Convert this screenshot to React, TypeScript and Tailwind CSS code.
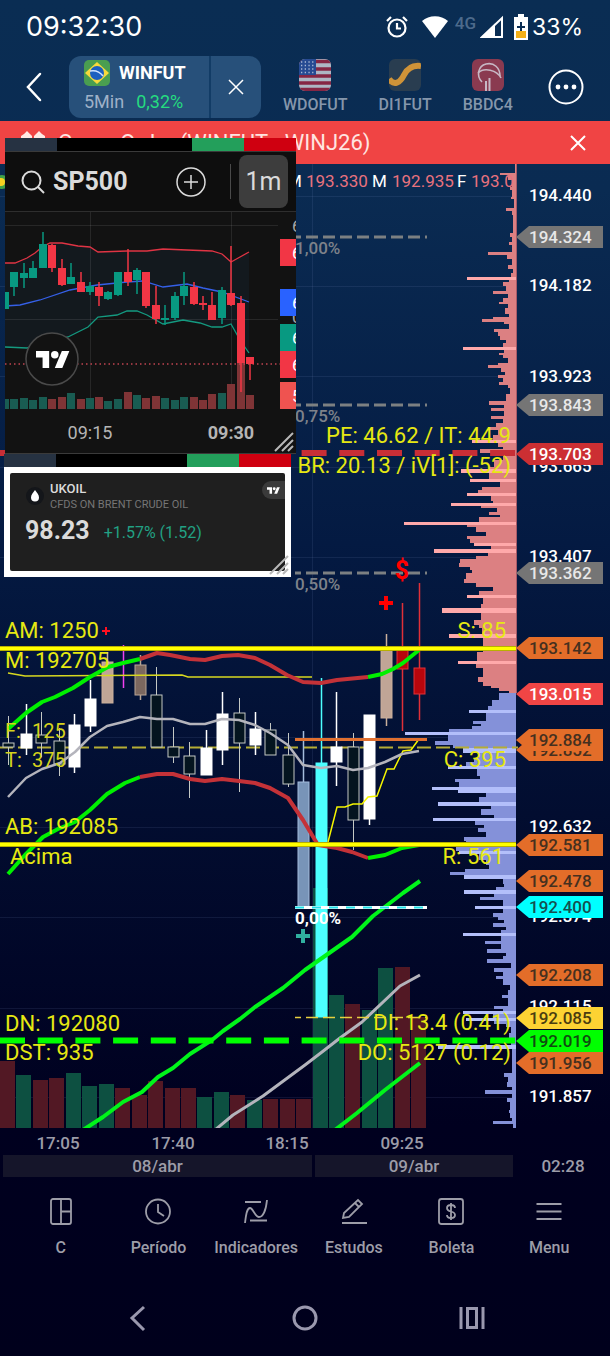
import type { ReactNode } from "react";

type Kind = "hollow" | "white" | "tan" | "brown" | "magenta" | "steel" | "cyan" | "red";

// x, high, body top, body bottom, low, kind
const candles: [number, number, number, number, number, Kind][] = [
  [8, 716, 743, 747, 765, "hollow"],
  [26, 704, 734, 748, 755, "white"],
  [41, 712, 735, 743, 757, "hollow"],
  [59, 728, 741, 764, 776, "hollow"],
  [74, 714, 725, 767, 773, "white"],
  [90, 680, 699, 726, 732, "white"],
  [107, 652, 662, 703, 703, "tan"],
  [123, 645, 645, 645, 688, "magenta"],
  [140, 655, 665, 695, 700, "brown"],
  [156, 667, 695, 747, 747, "hollow"],
  [173, 727, 747, 757, 763, "hollow"],
  [189, 742, 756, 774, 798, "hollow"],
  [206, 730, 748, 775, 775, "white"],
  [222, 692, 714, 750, 765, "white"],
  [239, 698, 713, 743, 792, "hollow"],
  [255, 712, 729, 745, 755, "white"],
  [270, 723, 730, 755, 755, "hollow"],
  [288, 733, 755, 784, 787, "hollow"],
  [303, 731, 782, 907, 907, "steel"],
  [321, 678, 763, 1017, 1017, "cyan"],
  [336, 692, 747, 762, 786, "white"],
  [353, 733, 747, 820, 850, "hollow"],
  [369, 715, 715, 819, 825, "white"],
  [386, 634, 650, 718, 726, "tan"],
  [402, 603, 650, 669, 731, "red"],
  [419, 583, 668, 694, 720, "red"],
];

const candleColors: Record<Kind, [string, string]> = {
  hollow: ["#04141f", "#c4c8c4"],
  white: ["#ffffff", "#ffffff"],
  tan: ["#c0a596", "#cbb09c"],
  brown: ["#7c685f", "#b8a596"],
  magenta: ["#f040f0", "#f040f0"],
  steel: ["#7894b8", "#a4bcdc"],
  cyan: ["#4cffff", "#4cffff"],
  red: ["#b8060c", "#e03038"],
};

const volumes: [number, "r" | "g"][] = [
  [1061, "r"], [1075, "g"], [1080, "r"], [1078, "r"], [1073, "g"], [1086, "g"], [1084, "g"],
  [1088, "r"], [1095, "r"], [1081, "r"], [1088, "r"], [1088, "r"], [1097, "g"], [1092, "g"],
  [1095, "r"], [1100, "g"], [1099, "r"], [1099, "r"], [1099, "r"], [888, "g"], [995, "g"],
  [1004, "r"], [1010, "g"], [968, "g"], [967, "r"], [1017, "r"],
];

// volume at price: y of the row start and its length
const sellProfile: [number, number][] = [
  [164, 1], [173, 16], [175, 8], [180, 4], [187, 6], [190, 4], [197, 5], [199, 2], [208, 10], [211, 4],
  [215, 3], [233, 6], [237, 4], [242, 7], [245, 4], [252, 28], [255, 9], [259, 4], [265, 8], [269, 3],
  [273, 5], [277, 49], [280, 7], [282, 13], [286, 10], [291, 23], [294, 8], [298, 13], [302, 17], [304, 8],
  [308, 11], [314, 7], [317, 23], [319, 34], [322, 12], [324, 7], [329, 22], [332, 18], [336, 16], [340, 10],
  [343, 13], [347, 53], [350, 12], [353, 17], [355, 13], [358, 8], [363, 18], [365, 28], [368, 15], [372, 11],
  [375, 18], [378, 13], [382, 17], [385, 8], [388, 6], [394, 10], [401, 27], [405, 12], [408, 25], [411, 12],
  [416, 25], [419, 13], [423, 20], [427, 28], [430, 18], [435, 23], [440, 44], [443, 18], [447, 13], [449, 36],
  [453, 13], [460, 22], [467, 27], [469, 55], [473, 27], [479, 46], [482, 16], [487, 34], [490, 38], [493, 49],
  [496, 25], [501, 23], [503, 65], [506, 35], [508, 19], [512, 27], [515, 16], [517, 37], [522, 112], [525, 49],
  [527, 40], [532, 30], [536, 49], [539, 46], [543, 42], [546, 25], [549, 82], [553, 28], [556, 40], [559, 56],
  [563, 57], [567, 46], [570, 44], [573, 50], [579, 52], [583, 40], [587, 23], [591, 37], [595, 49], [598, 33],
  [604, 35], [608, 74], [613, 35], [620, 42], [625, 37], [628, 34], [634, 67], [638, 33], [652, 39], [661, 58],
  [664, 40], [668, 33], [677, 38], [682, 33], [686, 25], [688, 17], [691, 7], [693, 0],
];

const buyProfile: [number, number][] = [
  [693, 17], [700, 24], [706, 28], [710, 47], [713, 30], [721, 43], [724, 35], [726, 44], [729, 67], [732, 111],
  [735, 68], [741, 81], [745, 63], [748, 53], [753, 37], [758, 42], [762, 50], [766, 68], [769, 39], [776, 36],
  [779, 61], [782, 57], [787, 84], [790, 58], [793, 30], [797, 37], [802, 78], [806, 25], [809, 35], [815, 22],
  [818, 83], [821, 41], [825, 32], [828, 38], [832, 30], [837, 52], [841, 50], [847, 60], [851, 57], [854, 37],
  [860, 30], [865, 27], [869, 51], [872, 66], [875, 52], [879, 13], [884, 12], [887, 20], [890, 52], [894, 22],
  [897, 36], [900, 13], [906, 41], [909, 13], [913, 23], [917, 18], [920, 12], [923, 23], [927, 10], [930, 15],
  [933, 53], [936, 15], [941, 31], [944, 15], [949, 29], [953, 10], [956, 13], [959, 29], [963, 5], [968, 22],
  [972, 13], [976, 20], [979, 13], [985, 6], [990, 8], [995, 14], [998, 8], [1006, 22], [1009, 13], [1011, 53],
  [1014, 23], [1018, 50], [1021, 22], [1024, 10], [1027, 5], [1033, 7], [1040, 5], [1045, 78], [1049, 4],
  [1073, 12], [1077, 8], [1082, 9], [1087, 4], [1090, 31], [1094, 4], [1098, 9], [1102, 6], [1110, 7],
  [1113, 6], [1118, 4], [1121, 23], [1124, 3], [1128, 0],
];

const gridRows = [196, 286, 376, 467, 557, 647, 737, 827, 917, 1008, 1097];

const priceLabels: [number, string][] = [
  [195, "194.440"],
  [285, "194.182"],
  [376, "193.923"],
  [466, "193.665"],
  [556, "193.407"],
  [826, "192.632"],
  [916, "192.374"],
  [1006, "192.115"],
  [1096, "191.857"],
];

const dark = "#45301f";

const priceTags: [number, string, string, string][] = [
  [237, "194.324", "#757575", "#e8e8e8"],
  [405, "193.843", "#757575", "#e8e8e8"],
  [454, "193.703", "#cc2f33", "#ffffff"],
  [573, "193.362", "#757575", "#e8e8e8"],
  [648, "193.142", "#e36d29", dark],
  [694, "193.015", "#f04545", "#ffffff"],
  [750, "192.852", "#e36d29", dark],
  [740, "192.884", "#e36d29", dark],
  [845, "192.581", "#e36d29", dark],
  [881, "192.478", "#e36d29", dark],
  [907, "192.400", "#00ffff", "#155050"],
  [975, "192.208", "#e36d29", dark],
  [1018, "192.085", "#fdd333", "#4a3d10"],
  [1041, "192.019", "#00ff00", "#104a10"],
  [1063, "191.956", "#e36d29", dark],
];

const notes: [number, number, string, "start" | "end"][] = [
  [5, 638, "AM: 1250", "start"],
  [5, 668, "M: 192705", "start"],
  [5, 834, "AB: 192085", "start"],
  [10, 864, "Acima", "start"],
  [5, 1031, "DN: 192080", "start"],
  [5, 1060, "DST: 935", "start"],
  [511, 443, "PE: 46.62 / IT: 44.9", "end"],
  [511, 473, "BR: 20.13 / iV[1]: (-52)", "end"],
  [506, 638, "S: 85", "end"],
  [506, 767, "C: 395", "end"],
  [504, 864, "R: 561", "end"],
  [511, 1030, "DI: 13.4 (0.41)", "end"],
  [511, 1060, "DO: 5127 (0.12)", "end"],
];

const fibs: [number, string][] = [
  [237, "1,00%"],
  [405, "0,75%"],
  [573, "0,50%"],
];

const hours: [number, string][] = [
  [58, "17:05"],
  [173, "17:40"],
  [287, "18:15"],
  [402, "09:25"],
];

const upperBand = "8,729 26,713 42,702 55,697 73,688 90,677 108,667 123,663 140,659";
const upperBandRed =
  "140,659 157,653 170,655 190,659 205,660 222,656 238,655 255,658 270,665 287,675 303,682 321,683 337,680 368,677";
const upperBandEnd = "368,677 382,674 393,669 403,663 419,650";
const middleBand =
  "8,797 26,778 42,769 60,763 75,752 90,737 107,726 123,722 140,717 157,719 173,719 190,724 205,724 222,719 239,720 255,725 270,733 288,745 303,765 321,768 337,766 353,770 368,768 385,762 402,754 419,751";
const lowerBand = "8,874 25,855 43,837 58,829 75,822 90,810 107,794 125,783 140,777";
const lowerBandRed =
  "140,777 157,774 173,774 190,779 205,781 222,779 239,781 255,783 270,788 288,798 303,820 318,845 337,848 352,852 368,858";
const lowerBandEnd = "368,858 385,855 402,848 419,845";
const longAverage =
  "83,1130 103,1117 123,1102 142,1092 158,1077 173,1068 190,1054 212,1040 223,1031 240,1019 255,1007 283,988 305,970 352,937 373,916 403,893 420,881";
const midAverage = "215,1130 233,1115 263,1096 305,1065 322,1052 340,1038 362,1022 400,986 420,975";
const lowAverage = "335,1130 357,1113 385,1090 407,1073 420,1063";

// x, high, body top, body bottom, low, volume top, color
const miniCandles: [number, number, number, number, number, number, "r" | "g"][] = [
  [5, 292, 292, 309, 309, 399, "g"],
  [14, 272, 272, 287, 296, 399, "g"],
  [24, 263, 273, 278, 288, 398, "g"],
  [33, 261, 268, 278, 278, 400, "g"],
  [43, 232, 244, 268, 268, 397, "g"],
  [52, 244, 245, 268, 272, 399, "r"],
  [62, 259, 268, 285, 286, 397, "r"],
  [71, 263, 277, 284, 284, 393, "g"],
  [81, 272, 282, 292, 292, 399, "r"],
  [90, 282, 286, 292, 295, 398, "g"],
  [99, 282, 287, 296, 306, 397, "r"],
  [108, 291, 292, 299, 300, 401, "g"],
  [118, 272, 272, 295, 296, 399, "g"],
  [128, 249, 272, 282, 286, 392, "r"],
  [137, 268, 270, 280, 294, 395, "g"],
  [146, 272, 272, 306, 308, 398, "r"],
  [156, 286, 305, 319, 324, 396, "r"],
  [165, 305, 318, 320, 325, 398, "g"],
  [175, 292, 296, 318, 320, 400, "g"],
  [184, 272, 286, 296, 305, 397, "g"],
  [194, 282, 287, 304, 305, 397, "r"],
  [203, 296, 303, 305, 310, 400, "r"],
  [212, 292, 305, 320, 320, 394, "r"],
  [222, 287, 290, 318, 324, 393, "g"],
  [231, 246, 293, 305, 306, 384, "r"],
  [241, 296, 303, 363, 392, 363, "r"],
  [250, 357, 357, 364, 380, 395, "r"],
];

const miniUpper =
  "5,263 15,263 27,258 35,253 42,247 50,243 62,243 78,246 90,247 98,252 127,251 147,251 163,249 187,250 212,251 222,254 231,262 240,257 249,252";
const miniMiddle = "5,306 20,305 40,300 70,290 97,285 127,282 143,281 163,287 187,284 203,288 222,292 249,302";
const miniLower =
  "5,347 27,348 68,337 88,327 98,317 117,315 127,311 137,311 147,315 163,324 183,320 200,323 212,327 222,327 231,324 240,340 249,353";

const miniTags: [number, string, string][] = [
  [212, "6", "none"],
  [303, "0", "none"],
  [239, "6", "#f23645"],
  [289, "6", "#2962ff"],
  [324, "6", "#089981"],
  [351, "6", "#f23645"],
  [382, "5", "#ef5350"],
];

function Profile({ rows, base, peak }: { rows: [number, number][]; base: string; peak: string }) {
  return (
    <g>
      {rows.slice(0, -1).map(([y, w], i) => {
        const h = rows[i + 1][0] - y;
        const isPeak = h <= 5 && w > 40 && w > rows[i + 1][1] * 1.3;
        return <rect key={i} x={516 - w} y={y} width={w} height={h} fill={isPeak ? peak : base} />;
      })}
    </g>
  );
}

function Cross({ x, y, r, width, color }: { x: number; y: number; r: number; width: number; color: string }) {
  return <path d={`M${x - r} ${y}h${r * 2}M${x} ${y - r}v${r * 2}`} stroke={color} strokeWidth={width} />;
}

function MainChart() {
  return (
    <svg viewBox="0 164 610 991" className="block w-full h-auto" role="img" aria-label="WINFUT">
      <defs>
        <clipPath id="plot">
          <rect x="0" y="164" width="518" height="964" />
        </clipPath>
        <clipPath id="ohlc">
          <rect x="0" y="164" width="514" height="40" />
        </clipPath>
      </defs>

      <g stroke="#8fa8d8" strokeOpacity="0.11" strokeWidth="1">
        {gridRows.map((y) => (
          <path key={y} d={`M0 ${y}.5H516`} />
        ))}
        <path d="M312.5 164V1128" />
      </g>

      <g clipPath="url(#plot)" fill="none">
        {volumes.map(([y, c], i) => (
          <rect
            key={i}
            x={Math.round(i * 16.45)}
            y={y}
            width="15"
            height={1128 - y}
            fill={c === "r" ? "#521824" : "#0d5041"}
          />
        ))}

        <Profile rows={sellProfile} base="#dc8082" peak="#ffa9aa" />
        <Profile rows={buyProfile} base="#8491d9" peak="#b3bffa" />
        <path d="M516.5 164V693" stroke="#a85a68" />

        <path d="M0 747.5H519" stroke="#b5ad35" strokeWidth="2" strokeDasharray="14 5" strokeDashoffset="1" />

        {candles.map(([x, high, top, bottom, low, kind]) => {
          const [fill, stroke] = candleColors[kind];
          return (
            <g key={x}>
              <path d={`M${x}.5 ${high}V${low}`} stroke={stroke} strokeWidth={kind === "hollow" ? 1 : 1.5} />
              {kind !== "magenta" && (
                <rect x={x - 5} y={top} width="11" height={bottom - top} fill={fill} stroke={stroke} strokeWidth="1" />
              )}
            </g>
          );
        })}

        <polyline points="8,673 25,676 182,675 188,677 312,677" stroke="#d8d820" strokeWidth="1.5" />
        <polyline
          points="328,842 337,807 345,807 353,804 362,804 368,797 377,796 387,769 394,769 403,751 411,750 419,739"
          stroke="#f5f500"
          strokeWidth="1.5"
        />

        <g strokeWidth="3" strokeLinejoin="round">
          <polyline points={middleBand} stroke="#b4b4bc" strokeWidth="2.5" />
          <polyline points={upperBand} stroke="#00f000" strokeWidth="4" />
          <polyline points={upperBandRed} stroke="#c43238" strokeWidth="4" />
          <polyline points={upperBandEnd} stroke="#00f000" strokeWidth="4" />
          <polyline points={lowerBand} stroke="#00f000" strokeWidth="4" />
          <polyline points={lowerBandRed} stroke="#c43238" strokeWidth="4" />
          <polyline points={lowerBandEnd} stroke="#00f000" strokeWidth="4" />
          <polyline points={longAverage} stroke="#00f51a" strokeWidth="4" />
          <polyline points={midAverage} stroke="#b4b4bc" />
          <polyline points={lowAverage} stroke="#00f51a" strokeWidth="4" />
        </g>

        <path d="M295 739.5H427" stroke="#e07030" strokeWidth="3" />
        {fibs.map(([y]) => (
          <path key={y} d={`M295 ${y}H427`} stroke="#7c8082" strokeWidth="3" strokeDasharray="12 5" strokeDashoffset="6" />
        ))}
        <path d="M295 907.5H427" stroke="#ffffff" strokeWidth="3" />
        <path d="M295 907.5H427" stroke="#20e0e8" strokeWidth="2" strokeDasharray="9 8" />
        <path d="M295 1017.5H427" stroke="#e8d040" strokeWidth="1.5" strokeDasharray="12 5" strokeDashoffset="6" />

        <path d="M0 648.5H516M0 844.5H516" stroke="#b8b000" strokeWidth="5" />
        <path d="M0 648.5H516M0 844.5H516" stroke="#ffff00" strokeWidth="3" />
        <path d="M0 453H518" stroke="#c82e36" strokeWidth="6" strokeDasharray="25 12.7" />
        <path d="M0 1040.5H518" stroke="#00ff00" strokeWidth="6" strokeDasharray="25 12.7" />
      </g>

      <Cross x={386} y={603} r={7} width={4} color="#ff0000" />
      <Cross x={106} y={631} r={4} width={2} color="#ff1020" />
      <Cross x={303} y={936} r={7} width={4} color="#30b0a0" />
      <text x="402" y="579" fontSize="25" fontWeight="700" fill="#ff0000" textAnchor="middle">
        $
      </text>

      <g fontSize="17" clipPath="url(#ohlc)">
        <circle cx="2" cy="182" r="7" fill="#3fa048" />
        <circle cx="1" cy="182" r="4" fill="#f5d020" />
        <text x="287" y="187" fill="#ffffff">M</text>
        <text x="306" y="187" fill="#e8727e">193.330</text>
        <text x="372" y="187" fill="#ffffff">M</text>
        <text x="392" y="187" fill="#e8727e">192.935</text>
        <text x="457" y="187" fill="#ffffff">F</text>
        <text x="471" y="187" fill="#e8727e">193.0</text>
      </g>

      <g fontSize="17" fontWeight="500" fill="#7e828a">
        {fibs.map(([y, label]) => (
          <text key={label} x="295" y={y + 17}>{label}</text>
        ))}
        <text x="295" y="924" fontWeight="700" fill="#ffffff">0,00%</text>
      </g>

      <g fontSize="22" fill="#e6e812">
        {notes.map(([x, y, label, anchor]) => (
          <text key={label} x={x} y={y} textAnchor={anchor}>{label}</text>
        ))}
      </g>
      <g fontSize="20" fill="#d6d21c">
        <text x="5" y="738">F:</text>
        <text x="32" y="738">125</text>
        <text x="5" y="767">T:</text>
        <text x="32" y="767">375</text>
      </g>

      <g fontSize="17" fontWeight="500">
        {priceLabels.map(([y, label]) => (
          <text key={label} x="529" y={y + 6} fill="#ffffff">{label}</text>
        ))}
        {priceTags.map(([y, label, bg, color]) => (
          <g key={label}>
            <path d={`M516 ${y}L529 ${y - 11}H603V${y + 11}H529Z`} fill={bg} />
            <text x="529" y={y + 6} fill={color}>{label}</text>
          </g>
        ))}
        {hours.map(([x, label]) => (
          <text key={label} x={x} y="1149" fill="#9c9ca8" textAnchor="middle">{label}</text>
        ))}
      </g>
    </svg>
  );
}

function TradingMark() {
  return (
    <>
      <path d="M14 18H7V7H0V0h14v18zM28 18h-8L27.5 0h8L28 18z" />
      <circle cx="20" cy="4" r="4" />
    </>
  );
}

function ResizeGrip({ className }: { className: string }) {
  return (
    <svg viewBox="0 0 20 20" className={`w-5 h-5 ${className}`} fill="none" stroke="#b8b8b8" strokeWidth="2">
      <path d="M1 19L19 1M8 19L19 8M14 19l5-5" />
    </svg>
  );
}

function MiniChart() {
  return (
    <svg viewBox="5 212 291 241" className="block w-full h-auto" role="img" aria-label="SP500">
      <rect x="5" y="212" width="291" height="241" fill="#121212" />
      <polygon points={`${miniUpper} ${miniLower.split(" ").reverse().join(" ")}`} fill="#13191e" />
      <path d="M90.5 212V409M231.5 212V409M5 225.5H278M5 319.5H278" stroke="#ffffff" strokeOpacity="0.09" />
      {miniCandles.map(([x, , , , , v, c]) => (
        <rect key={x} x={x - 4} y={v} width="8" height={409 - v} fill={c === "r" ? "#7f3436" : "#195c52"} />
      ))}
      <path d="M5 364H280" stroke="#c04450" strokeWidth="1.5" strokeDasharray="1.5 3" />
      <g fill="none" strokeWidth="1.3">
        <polyline points={miniUpper} stroke="#e03444" />
        <polyline points={miniMiddle} stroke="#3560e8" />
        <polyline points={miniLower} stroke="#149a80" />
      </g>
      {miniCandles.map(([x, high, top, bottom, low, , c]) => {
        const color = c === "r" ? "#f23645" : "#089981";
        return (
          <g key={x}>
            <path d={`M${x} ${high}V${low}`} stroke={color} strokeWidth="1.5" />
            <rect x={x - 4} y={top} width="8" height={bottom - top} fill={color} />
          </g>
        );
      })}
      <circle cx="52" cy="359" r="26" fill="#121212" stroke="#4a4a4a" strokeWidth="1.5" />
      <g fill="#ffffff" transform="translate(36 351) scale(0.94)">
        <TradingMark />
      </g>
      <g fontSize="17">
        {miniTags.map(([y, label, bg], i) => (
          <g key={i}>
            <rect x="280" y={y} width="16" height="27" fill={bg} />
            <text x="292" y={y + 20} fill={bg === "none" ? "#a8a8a8" : "#ffffff"}>{label}</text>
          </g>
        ))}
      </g>
      <g fontSize="18" fill="#b5b5b5" textAnchor="middle">
        <text x="90" y="439">09:15</text>
        <text x="231" y="439" fontWeight="700">09:30</text>
      </g>
    </svg>
  );
}

function WindowStrip() {
  return (
    <div className="flex h-[13px] bg-black">
      <div className="w-[52px] bg-[#263242]" />
      <div className="flex-1" />
      <button aria-label="Minimizar" className="w-[52px] bg-[#239f5b]" />
      <button aria-label="Fechar" className="w-[52px] bg-[#cf0010]" />
    </div>
  );
}

function Sp500Window() {
  return (
    <section className="relative ml-px w-[291px] overflow-hidden">
      <WindowStrip />
      <div className="border-y border-[#3a3a3a] bg-[#0e0e0e]">
        <div className="flex items-center h-[60px] pl-4 pr-2 border-b border-[#2e2e2e] text-[#dbdbdb]">
          <svg viewBox="0 0 24 24" className="w-6 h-6" fill="none" stroke="currentColor" strokeWidth="2">
            <circle cx="10.5" cy="10.5" r="9" />
            <path d="M17 17l6 6" />
          </svg>
          <span className="ml-2 text-[25px] font-bold">SP500</span>
          <button aria-label="Adicionar" className="ml-auto mr-6">
            <svg viewBox="0 0 30 30" className="w-[30px] h-[30px]" fill="none" stroke="currentColor" strokeWidth="1.5">
              <circle cx="15" cy="15" r="14" />
              <path d="M8 15h14M15 8v14" />
            </svg>
          </button>
          <div className="w-px h-[35px] bg-[#4a4a4a]" />
          <button className="ml-2 w-[49px] h-[53px] rounded-lg bg-[#3d3d3d] text-[25px]">1m</button>
        </div>
        <MiniChart />
      </div>
      <ResizeGrip className="absolute right-[2px] bottom-[2px]" />
    </section>
  );
}

function UkoilWindow() {
  return (
    <section className="relative w-[287px]">
      <WindowStrip />
      <div className="bg-white p-[6px]">
        <div className="relative h-[98px] rounded-xs bg-[#1f1f1f]">
          <div className="flex items-start pl-4 pt-2">
            <svg viewBox="0 0 18 18" className="w-[18px] h-[18px] mt-[6px]">
              <circle cx="9" cy="9" r="9" fill="#14161a" />
              <path d="M9 3c2 3 4 4.5 4 7.5a4 4 0 0 1-8 0C5 7.5 7 6 9 3z" fill="#ffffff" />
            </svg>
            <div className="ml-[6px]">
              <p className="text-[13px] leading-4 font-medium text-[#dbdbdb]">UKOIL</p>
              <p className="text-[11px] leading-4 text-[#767676]">CFDS ON BRENT CRUDE OIL</p>
            </div>
          </div>
          <div className="flex items-center pl-[15px] mt-1">
            <span className="text-[25px] leading-7 font-bold text-[#dbdbdb]">98.23</span>
            <span className="ml-[14px] mt-1 text-base leading-6 text-[#22a184]">+1.57% (1.52)</span>
          </div>
          <div className="absolute right-0 top-2 flex items-center justify-center w-[23px] h-[18px] rounded-l-full bg-[#3a3a3a]">
            <svg viewBox="0 0 36 18" className="w-[13px] h-[7px]" fill="#ffffff">
              <TradingMark />
            </svg>
          </div>
        </div>
      </div>
      <ResizeGrip className="absolute right-[2px] bottom-[2px]" />
    </section>
  );
}

function StatusBar() {
  return (
    <div className="flex items-center justify-between h-[54px] pl-[26px] pr-[27px] text-white font-[Inter,sans-serif]">
      <span className="text-[27px] leading-8">09:32:30</span>
      <div className="flex items-center">
        <svg viewBox="0 0 24 24" className="w-6 h-6" fill="none" stroke="currentColor" strokeWidth="2.2">
          <circle cx="12" cy="13" r="8.5" />
          <path d="M12 8v5.5h4M2 6l4-4M22 6l-4-4" />
        </svg>
        <svg viewBox="0 0 28 24" className="w-7 h-6 ml-3" fill="currentColor">
          <path d="M1 6C8-.5 20-.5 27 6L14 23z" />
        </svg>
        <span className="self-start ml-[6px] font-[Roboto,sans-serif] text-[17px] leading-6 font-medium text-[#4d6a8c]">4G</span>
        <svg viewBox="0 0 24 24" className="w-6 h-6 ml-1" fill="none" stroke="currentColor" strokeWidth="2">
          <path d="M2 22L22 3v19z" />
          <path d="M3 22L14 11v11z" fill="currentColor" />
        </svg>
        <svg viewBox="0 0 14 26" className="w-[14px] h-[26px] ml-[10px]">
          <path d="M4 0h6v3h4v23H0V3h4z" fill="#ffffff" />
          <path d="M2 17h10v7H2z" fill="#f5b016" />
          <path d="M7 8v9M3 13h8" stroke="#0a2d53" strokeWidth="2" />
        </svg>
        <span className="ml-1 text-[23px] leading-8">33%</span>
      </div>
    </div>
  );
}

function BrazilFlag() {
  return (
    <svg viewBox="0 0 26 26" className="w-[26px] h-[26px]">
      <rect width="26" height="26" rx="5" fill="#4a9e50" />
      <path d="M13 2l12 11-12 11L1 13z" fill="#f7d93c" />
      <circle cx="13" cy="13" r="7" fill="#1c5fc0" />
      <path d="M6 11c5-1 10 1 13 5" stroke="#cfe2ff" strokeWidth="1.5" fill="none" />
    </svg>
  );
}

function UsaFlag() {
  return (
    <svg viewBox="0 0 32 32" className="w-8 h-8 rounded-md opacity-75">
      <rect width="32" height="32" fill="#e4e4ea" />
      <path d="M0 2.5h32M0 10h32M0 17h32M0 24h32M0 30.5h32" stroke="#b02440" strokeWidth="3.5" />
      <rect width="17" height="16" fill="#3054a8" />
      <path d="M2 3h14M2 6.5h14M2 10h14M2 13.5h14" stroke="#dfe6ff" strokeWidth="1.3" strokeDasharray="1.3 2.4" />
    </svg>
  );
}

function RateIcon() {
  return (
    <svg viewBox="0 0 32 32" className="w-8 h-8 rounded-md">
      <rect width="32" height="32" fill="#293d50" />
      <path d="M0 20c5 7 11 4 15-4S25 6 32 7" stroke="#cf9338" strokeWidth="6" fill="none" />
    </svg>
  );
}

function BradescoIcon() {
  return (
    <svg viewBox="0 0 32 32" className="w-8 h-8 rounded-md">
      <rect width="32" height="32" fill="#8a3a50" />
      <g fill="none" stroke="#c7b7c4" strokeWidth="1.6">
        <path d="M10 23C4 17 6 7 14 5s14 4 14 12" />
        <path d="M6 14c6-6 19-3 23 5" />
        <path d="M14 32V22M17.5 32V19" strokeWidth="2" />
      </g>
    </svg>
  );
}

const tabs: { name: string; icon: ReactNode }[] = [
  { name: "WDOFUT", icon: <UsaFlag /> },
  { name: "DI1FUT", icon: <RateIcon /> },
  { name: "BBDC4", icon: <BradescoIcon /> },
];

function TabsHeader() {
  return (
    <header className="flex items-center h-[67px] pb-[2px] pl-6 pr-[26px]">
      <button aria-label="Voltar" className="text-white">
        <svg viewBox="0 0 20 30" className="w-5 h-[30px]" fill="none" stroke="currentColor" strokeWidth="2.5" strokeLinecap="round">
          <path d="M16 2L4 15l12 13" />
        </svg>
      </button>
      <div className="flex ml-[25px] h-[62px] w-[192px] rounded-xl overflow-hidden bg-[#27507a]">
        <button className="flex-1 pl-[15px] text-left border-r-2 border-[#123c66]">
          <span className="flex items-center gap-[9px]">
            <BrazilFlag />
            <span className="text-lg leading-6 font-bold text-white">WINFUT</span>
          </span>
          <span className="flex gap-3 mt-1 text-[18px] leading-6">
            <span className="text-[#9fb1c8]">5Min</span>
            <span className="text-[#25dc80]">0,32%</span>
          </span>
        </button>
        <button aria-label="Fechar aba" className="flex items-center justify-center w-[50px] text-white">
          <svg viewBox="0 0 16 16" className="w-4 h-4" stroke="currentColor" strokeWidth="1.5">
            <path d="M1 1l14 14M15 1L1 15" />
          </svg>
        </button>
      </div>
      <div className="flex gap-[31px] ml-[22px]">
        {tabs.map((tab) => (
          <button key={tab.name} className="flex flex-col items-center gap-1 text-base leading-5 font-medium text-[#8596ab]">
            {tab.icon}
            {tab.name}
          </button>
        ))}
      </div>
      <button aria-label="Mais" className="ml-auto text-white">
        <svg viewBox="0 0 36 36" className="w-9 h-9" fill="currentColor">
          <circle cx="18" cy="18" r="16.5" fill="none" stroke="currentColor" strokeWidth="2" />
          <circle cx="10" cy="18" r="2.4" />
          <circle cx="18" cy="18" r="2.4" />
          <circle cx="26" cy="18" r="2.4" />
        </svg>
      </button>
    </header>
  );
}

function CrossOrderBar() {
  return (
    <div className="flex items-center h-[43px] pl-5 pr-[23px] bg-[#f04444] text-white">
      <svg viewBox="0 0 26 24" className="w-[26px] h-6" fill="#ffe9e4">
        <path d="M7 0l3 3 2 2v5H8v9H6v-9H1V5l3-2zM19 0l3 3 3 2v5h-5v9h-2v-9h-4V5l2-2z" />
      </svg>
      <p className="ml-3 text-[22px] leading-6 text-[#ffe4e1]">Cross Order (WINFUT - WINJ26)</p>
      <button aria-label="Fechar aviso" className="ml-auto">
        <svg viewBox="0 0 18 18" className="w-[18px] h-[18px]" stroke="currentColor" strokeWidth="2">
          <path d="M2 2l14 14M16 2L2 16" />
        </svg>
      </button>
    </div>
  );
}

const tools: { label: string; icon: ReactNode }[] = [
  {
    label: "C",
    icon: (
      <>
        <rect x="4" y="2" width="20" height="25" rx="2" />
        <path d="M14 2v25M14 14.5h10" />
      </>
    ),
  },
  {
    label: "Período",
    icon: (
      <>
        <circle cx="14" cy="14.5" r="12" />
        <path d="M14 7v8l6 4" />
      </>
    ),
  },
  { label: "Indicadores", icon: <path d="M3 5h16M8 23.5h17M3 26c1-9 2-15 5-15s5 9 9 9 7-7 8-17" /> },
  { label: "Estudos", icon: <path d="M2 26h25M3 21l1-5L18 3l4 4L9 20zM15 6l4 4" /> },
  {
    label: "Boleta",
    icon: (
      <>
        <rect x="2" y="2" width="24" height="25" rx="2.5" />
        <path d="M18 11c0-2-2-3-4-3s-4 1-4 3 2 3 4 3.5 4 1 4 3.5-2 3-4 3-4-1-4-3M14 6v17" />
      </>
    ),
  },
  { label: "Menu", icon: <path d="M1.5 7h25M1.5 14.5h25M1.5 22h25" /> },
];

function ToolBar() {
  return (
    <nav className="grid grid-cols-6 px-3 pt-5 text-[#9d9da8]">
      {tools.map((tool) => (
        <button key={tool.label} className="flex flex-col items-center gap-3 text-base leading-5 font-medium">
          <svg viewBox="0 0 28 29" className="w-7 h-[29px]" fill="none" stroke="currentColor" strokeWidth="1.8">
            {tool.icon}
          </svg>
          {tool.label}
        </button>
      ))}
    </nav>
  );
}

function SystemNav() {
  return (
    <nav className="grid grid-cols-3 justify-items-center px-[54px] pt-[46px] pb-6 text-[#9a98ae]">
      <button aria-label="Voltar">
        <svg viewBox="0 0 28 28" className="w-7 h-7" fill="none" stroke="currentColor" strokeWidth="3">
          <path d="M20 3L8 14l12 12" />
        </svg>
      </button>
      <button aria-label="Início">
        <svg viewBox="0 0 28 28" className="w-7 h-7" fill="none" stroke="currentColor" strokeWidth="3">
          <circle cx="14" cy="14" r="11" />
        </svg>
      </button>
      <button aria-label="Recentes">
        <svg viewBox="0 0 28 28" className="w-7 h-7" fill="none" stroke="currentColor" strokeWidth="3">
          <path d="M3 3v22M25 3v22M9.5 4.5h9v19h-9z" />
        </svg>
      </button>
    </nav>
  );
}

export default function App() {
  return (
    <div className="relative flex flex-col min-h-screen overflow-hidden bg-[linear-gradient(#0a2d53_0%,#0a2b52_14%,#041a42_40%,#020d30_60%,#00001f_83%,#00001c_100%)] font-[Roboto,sans-serif]">
      <StatusBar />
      <TabsHeader />
      <CrossOrderBar />
      <MainChart />
      <div className="grid grid-cols-[309fr_198fr_94fr] gap-[3px] pl-[3px] text-[17px] leading-[22px] font-medium text-center text-[#9c9ca8]">
        <div className="bg-[#15152a]">08/abr</div>
        <div className="bg-[#15152a]">09/abr</div>
        <div>02:28</div>
      </div>
      <ToolBar />
      <SystemNav />
      <div className="absolute left-1 top-[138px]">
        <Sp500Window />
        <UkoilWindow />
      </div>
    </div>
  );
}
